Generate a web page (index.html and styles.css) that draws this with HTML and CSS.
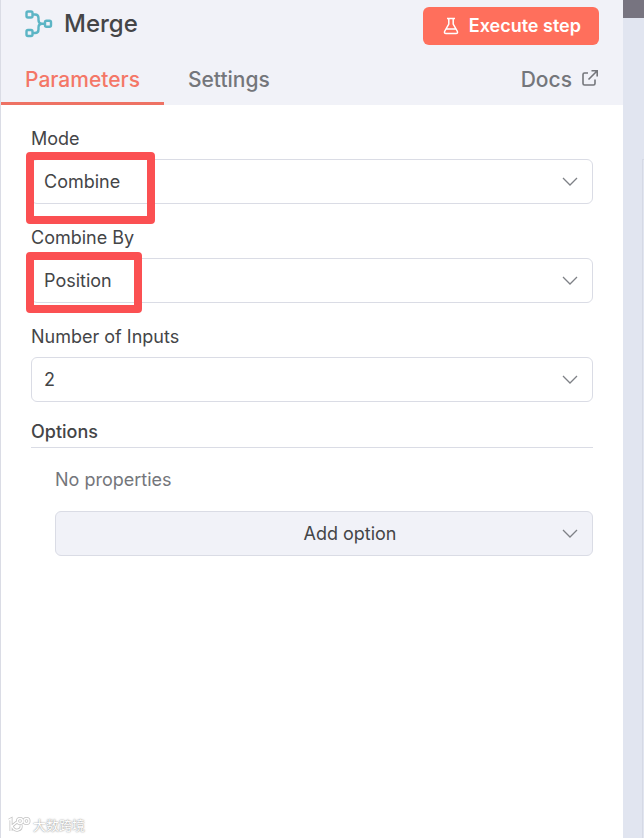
FILE: index.html
```
<!DOCTYPE html>
<html lang="en">
<head>
<meta charset="utf-8">
<meta name="viewport" content="width=device-width, initial-scale=1">
<title>Merge</title>
<link rel="stylesheet" href="styles.css">
</head>
<body>
<main class="panel">
  <header class="header">
    <div class="title-row">
      <svg class="node-icon" viewBox="0 0 28 28" aria-hidden="true">
        <rect x="1.5" y="1.5" width="6" height="6" rx="1.5"/>
        <rect x="1.5" y="20" width="6" height="6" rx="1.5"/>
        <rect x="20" y="10.700" width="6" height="6" rx="1.500"/>
        <path d="M7.500 4.500H10Q13.500 4.500 13.500 8V10Q13.500 13.700 17 13.700H20M7.500 23H10Q13.500 23 13.500 19.500V17.500Q13.500 13.700 17 13.700"/>
      </svg>
      <h1 class="title">Merge</h1>
      <button class="execute" type="button">
        <svg class="flask" viewBox="0 0 16 18" aria-hidden="true">
          <path d="M4 1.500H12M5.800 1.500V7L1.700 14.200Q.8 16.500 3 16.500H13Q15.200 16.500 14.300 14.200L10.200 7V1.500M3.500 12H12.500"/>
        </svg>
        Execute step
      </button>
    </div>
    <nav class="tabs">
      <a class="tab active" href="#parameters">Parameters</a>
      <a class="tab" href="#settings">Settings</a>
      <a class="tab docs" href="#docs">Docs
        <svg class="external" viewBox="0 0 18 18" aria-hidden="true">
          <path d="M7 4H3.500Q2 4 2 5.500V14.500Q2 16 3.500 16H12.500Q14 16 14 14.500V10.500M10.500 1.800H16.200V7.500M16 2L7.500 10.500"/>
        </svg>
      </a>
    </nav>
  </header>
  <form class="parameters" id="parameters">
    <div class="field">
      <label for="mode">Mode</label>
      <div class="control">
        <select id="mode"><option>Combine</option></select>
        <svg class="chevron" viewBox="0 0 16 10" aria-hidden="true"><path d="M1 1L8 8L15 1"/></svg>
        <span class="highlight highlight-mode"></span>
      </div>
    </div>
    <div class="field">
      <label for="combine-by">Combine By</label>
      <div class="control">
        <select id="combine-by"><option>Position</option></select>
        <svg class="chevron" viewBox="0 0 16 10" aria-hidden="true"><path d="M1 1L8 8L15 1"/></svg>
        <span class="highlight highlight-by"></span>
      </div>
    </div>
    <div class="field">
      <label for="inputs">Number of Inputs</label>
      <div class="control">
        <select id="inputs"><option>2</option></select>
        <svg class="chevron" viewBox="0 0 16 10" aria-hidden="true"><path d="M1 1L8 8L15 1"/></svg>
      </div>
    </div>
    <section class="options">
      <h2 class="options-title">Options</h2>
      <div class="options-body">
        <p class="empty">No properties</p>
        <div class="control">
          <select class="add-option" aria-label="Add option"><option>Add option</option></select>
          <svg class="chevron" viewBox="0 0 16 10" aria-hidden="true"><path d="M1 1L8 8L15 1"/></svg>
        </div>
      </div>
    </section>
  </form>
  <footer class="watermark" lang="zh">
    <svg class="mark" viewBox="0 0 24 18" aria-hidden="true">
      <g class="mark-edge"><path d="M2 4L4 3V15M10 6L5 10Q7 15 11 14Q15 13 14 9"/><circle cx="13" cy="5" r="2.500"/><circle cx="19.500" cy="5" r="2.500"/></g>
      <g class="mark-fill"><path d="M2 4L4 3V15M10 6L5 10Q7 15 11 14Q15 13 14 9"/><circle cx="13" cy="5" r="2.500"/><circle cx="19.500" cy="5" r="2.500"/></g>
    </svg>
    <span>大数跨境</span>
  </footer>
</main>
<aside class="backdrop"><div class="backdrop-top"></div><div class="backdrop-body"></div></aside>
</body>
</html>
```
FILE: styles.css
```
* {
  box-sizing: border-box;
}

body {
  margin: 0;
  min-height: 100vh;
  display: flex;
  background: #fff;
  color: #444547;
  font: 18px/24px Inter, "Noto Sans CJK SC", sans-serif;
}

.panel {
  flex: 1;
  display: flex;
  flex-direction: column;
  border-left: 1px solid #dadce5;
}

.header {
  background: #f1f2f8;
}

.title-row {
  display: flex;
  align-items: center;
  padding: 7px 24px 0;
}

.node-icon {
  width: 28px;
  height: 28px;
  margin-bottom: 4px;
  fill: none;
  stroke: #5cb5c5;
  stroke-width: 2.4;
}

.title {
  flex: 1;
  margin: 0 0 4px 11px;
  font-size: 24px;
  line-height: 32px;
  font-weight: 500;
}

.execute {
  display: flex;
  align-items: center;
  gap: 10px;
  height: 38px;
  padding: 0 18px 0 20px;
  border: 0;
  border-radius: 6px;
  background: #ff6f5c;
  color: #fff;
  font: 600 18px/24px Inter, sans-serif;
}

.flask {
  width: 16px;
  height: 18px;
  fill: none;
  stroke: currentColor;
  stroke-width: 1.5;
}

.tabs {
  display: flex;
  padding-right: 24px;
}

.tab {
  height: 60px;
  padding: 19px 24px 0;
  border-bottom: 3px solid transparent;
  color: #74767b;
  font-size: 21px;
  line-height: 32px;
  font-weight: 500;
  text-decoration: none;
}

.tab.active {
  border-color: #ee7264;
  color: #f47767;
}

.docs {
  display: flex;
  gap: 9px;
  margin-left: auto;
  padding-right: 0;
}

.external {
  width: 18px;
  height: 18px;
  margin-top: 5px;
  fill: none;
  stroke: currentColor;
  stroke-width: 1.6;
}

.parameters {
  flex: 1;
  padding: 22px 30px;
}

.field {
  margin-bottom: 22px;
}

.field label {
  display: block;
  margin-bottom: 8px;
}

.control {
  position: relative;
}

select {
  appearance: none;
  display: block;
  width: 100%;
  height: 45px;
  padding: 0 40px 0 12px;
  border: 1px solid #dadce5;
  border-radius: 6px;
  background: #fff;
  color: inherit;
  font: inherit;
}

.chevron {
  position: absolute;
  top: 18px;
  right: 15px;
  width: 16px;
  height: 10px;
  fill: none;
  stroke: #7e8186;
  stroke-width: 1.3;
  pointer-events: none;
}

.highlight {
  position: absolute;
  left: -5px;
  border: 8px solid #fb5052;
  border-radius: 4px;
  pointer-events: none;
}

.highlight-mode {
  top: -7px;
  width: 129px;
  height: 72px;
}

.highlight-by {
  top: -6px;
  width: 116px;
  height: 61px;
}

.options {
  margin-top: -4px;
}

.options-title {
  margin: 0;
  padding-bottom: 3px;
  border-bottom: 1px solid #dadce5;
  font-size: 18px;
  line-height: 24px;
  font-weight: 500;
}

.options-body {
  padding: 20px 0 0 24px;
}

.empty {
  margin: 0 0 19px;
  color: #74767b;
}

.add-option {
  padding: 0 0 0 52px;
  background: #f1f2f8;
  text-align: center;
  text-align-last: center;
}

.watermark {
  display: flex;
  align-items: center;
  gap: 2px;
  padding: 0 6px 3px;
  color: #fff;
  font: 13px/20px "Noto Sans CJK SC", sans-serif;
  text-shadow: 0 0 2px #999, 0 0 1px #aaa;
}

.mark {
  width: 24px;
  height: 18px;
  fill: none;
}

.mark-edge {
  stroke: #c4c4c4;
  stroke-width: 3;
}

.mark-fill {
  stroke: #fff;
  stroke-width: 1.4;
}

.backdrop {
  width: 21px;
  display: flex;
  flex-direction: column;
  background: #e1e5f0;
}

.backdrop-top {
  height: 18px;
  background: #777480;
}

.backdrop-body {
  flex: 1;
  margin: 141px 0 0 19px;
  border-top: 1px solid #d5d9e5;
  border-left: 1px solid #d5d9e5;
}
```
